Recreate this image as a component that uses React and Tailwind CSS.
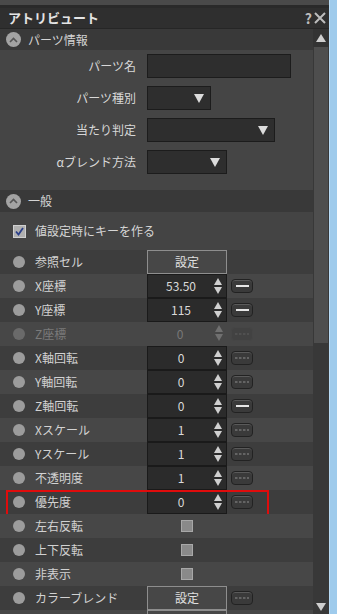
import React from 'react'

const font = { fontFamily: '"Noto Sans CJK JP", "Noto Sans", sans-serif' }

function SectionHeader({ title, h }) {
  return (
    <div className={'shrink-0 flex items-center bg-[#393939] pl-[6px] gap-[7px] ' + h}>
      <span className="w-[15px] h-[15px] rounded-full bg-[#a3a3a3] flex items-center justify-center">
        <svg width="9" height="6" viewBox="0 0 9 6">
          <path d="M1 5 L4.5 1.5 L8 5" stroke="#555" strokeWidth="1.6" fill="none" />
        </svg>
      </span>
      <span className="text-[12px] text-[#d4d4d4]">{title}</span>
    </div>
  )
}

function Arrow() {
  return (
    <svg width="10" height="9" viewBox="0 0 10 9">
      <path d="M0 0 H10 L5 9 Z" fill="#dcdcdc" />
    </svg>
  )
}

function FormRow({ label, width, select }) {
  return (
    <div className="h-[32px] shrink-0 flex items-center">
      <div className="w-[137px] text-right text-[12px] text-[#d8d8d8] pr-[1px]">{label}</div>
      <div
        className="ml-[10px] h-[24px] bg-[#2e2e2e] border border-[#1c1c1c] flex items-center justify-end pr-[6px]"
        style={{ width }}
      >
        {select && <Arrow />}
      </div>
    </div>
  )
}

function Spinner({ dim }) {
  const c = dim ? '#707070' : '#d0d0d0'
  return (
    <svg width="8" height="16" viewBox="0 0 8 16" className="absolute right-[4px] top-[3px]">
      <path d="M4 0 L8 7 H0 Z" fill={c} />
      <path d="M0 9 H8 L4 16 Z" fill={c} />
    </svg>
  )
}

function KeyButton({ kind, dim }) {
  return (
    <div
      className={
        'ml-[4px] w-[22px] h-[14px] rounded-[4px] border flex items-center justify-center ' +
        (dim ? 'border-[#464646] bg-[#424242]' : 'border-[#222] bg-[#3a3a3a] shadow-[inset_0_1px_0_#5a5a5a]')
      }
    >
      {kind === 'line' ? (
        <span className="w-[13px] h-[2px] bg-[#e6e6e6]" />
      ) : (
        <svg width="14" height="2" viewBox="0 0 14 2">
          <path d="M0 1 H14" stroke={dim ? '#5e5e5e' : '#8e8e8e'} strokeWidth="1" strokeDasharray="2.5 1.5" />
        </svg>
      )}
    </div>
  )
}

const rows = [
  { label: '参照セル', type: 'button' },
  { label: 'X座標', type: 'num', value: '53.50', key: 'line' },
  { label: 'Y座標', type: 'num', value: '115', key: 'line' },
  { label: 'Z座標', type: 'num', value: '0', key: 'dash', disabled: true },
  { label: 'X軸回転', type: 'num', value: '0', key: 'dash' },
  { label: 'Y軸回転', type: 'num', value: '0', key: 'dash' },
  { label: 'Z軸回転', type: 'num', value: '0', key: 'line' },
  { label: 'Xスケール', type: 'num', value: '1', key: 'dash' },
  { label: 'Yスケール', type: 'num', value: '1', key: 'dash' },
  { label: '不透明度', type: 'num', value: '1', key: 'dash' },
  { label: '優先度', type: 'num', value: '0', key: 'dash', highlight: true },
  { label: '左右反転', type: 'check' },
  { label: '上下反転', type: 'check' },
  { label: '非表示', type: 'check' },
  { label: 'カラーブレンド', type: 'button', key: 'dash' },
]

function PropRow({ row, index }) {
  const bg = index % 2 === 1 ? 'bg-[#474747]' : 'bg-[#3d3d3d]'
  const dis = row.disabled
  return (
    <div className={'h-[24px] shrink-0 flex items-center relative ' + bg}>
      <span className={'ml-[13px] w-[12px] h-[12px] rounded-full ' + (dis ? 'bg-[#6a6a6a]' : 'bg-[#9c9c9c]')} />
      <span className={'ml-[10px] w-[112px] text-[12px] ' + (dis ? 'text-[#7a7a7a]' : 'text-[#d2d2d2]')}>{row.label}</span>
      {row.type === 'button' && (
        <>
          <div className="w-[80px] h-[24px] bg-[#474747] border border-[#8e8e8e] flex items-center justify-center text-[12px] text-[#e0e0e0]">
            設定
          </div>
          {row.key && <KeyButton kind={row.key} />}
        </>
      )}
      {row.type === 'num' && (
        <>
          <div
            className={
              'w-[80px] h-[24px] relative flex items-center text-[12px] ' +
              (dis ? 'text-[#787878]' : 'bg-[#2b2b2b] border border-[#1a1a1a] text-[#dadada]')
            }
          >
            <span className="w-[66px] text-center">{row.value}</span>
            <Spinner dim={dis} />
          </div>
          <KeyButton kind={row.key} dim={dis} />
        </>
      )}
      {row.type === 'check' && (
        <div className="ml-[34px] w-[12px] h-[12px] bg-[#8a8a8a] border border-[#a8a8a8]" />
      )}
      {row.highlight && (
        <div className="absolute left-[6px] top-0 w-[263px] h-[30px] border-2 border-[#e00c0c] pointer-events-none" />
      )}
    </div>
  )
}

export default function App() {
  return (
    <div className="w-[337px] h-[614px] overflow-hidden flex bg-[#444]" style={font}>
      <div className="w-[329px] flex flex-col">
        <div className="h-[5px] shrink-0 bg-[#4a4a4a]" />
        <div className="h-[3px] shrink-0 bg-[#2a2a2a]" />
        <div className="h-[20px] shrink-0 bg-[#2f2f2f] flex items-center justify-between pl-[8px] pr-[3px]">
          <span className="text-[13px] font-bold text-[#e4e4e4]">アトリビュート</span>
          <span className="flex items-center gap-[2px] text-[#bdbdbd]">
            <span className="text-[14px] font-bold leading-none">?</span>
            <svg width="12" height="12" viewBox="0 0 12 12">
              <path d="M1 1 L11 11 M11 1 L1 11" stroke="#bdbdbd" strokeWidth="2" />
            </svg>
          </span>
        </div>
        <div className="h-[1px] shrink-0 bg-[#262626]" />
        <div className="flex flex-1 min-h-0">
          <div className="w-[313px] flex flex-col bg-[#444444] overflow-hidden">
            <SectionHeader title="パーツ情報" h="h-[21px]" />
            <div className="bg-[#454545] pb-[12px] shrink-0">
              <FormRow label="パーツ名" width={144} />
              <FormRow label="パーツ種別" width={64} select />
              <FormRow label="当たり判定" width={128} select />
              <FormRow label="αブレンド方法" width={80} select />
            </div>
            <SectionHeader title="一般" h="h-[22px]" />
            <div className="h-[38px] shrink-0 flex items-center bg-[#444444]">
              <span className="ml-[13px] w-[13px] h-[13px] bg-[#b0b0b0] border border-[#d0d0d0] flex items-center justify-center">
                <svg width="9" height="9" viewBox="0 0 9 9">
                  <path d="M1 4.5 L3.5 7.5 L8 1" stroke="#2a3f8a" strokeWidth="1.8" fill="none" />
                </svg>
              </span>
              <span className="ml-[9px] text-[12px] text-[#d6d6d6]">値設定時にキーを作る</span>
            </div>
            {rows.map((r, i) => (
              <PropRow key={r.label} row={r} index={i} />
            ))}
            <div className="h-[24px] shrink-0 bg-[#474747] flex">
              <div className="ml-[147px] w-[80px] h-[24px] border border-[#8e8e8e] bg-[#474747]" />
            </div>
          </div>
          <div className="w-[16px] flex flex-col bg-[#383838]">
            <div className="h-[18px] shrink-0 flex items-center justify-center bg-[#333]">
              <svg width="10" height="8" viewBox="0 0 10 8">
                <path d="M5 0 L10 8 H0 Z" fill="#cfcfcf" />
              </svg>
            </div>
            <div className="h-[296px] shrink-0 bg-[#4e4e4e] mx-[1px]" />
            <div className="flex-1" />
            <div className="h-[14px] shrink-0 flex items-center justify-center">
              <svg width="10" height="8" viewBox="0 0 10 8">
                <path d="M0 0 H10 L5 8 Z" fill="#cfcfcf" />
              </svg>
            </div>
          </div>
        </div>
      </div>
      <div className="w-[8px] bg-[#9fcbec] border-l border-[#b8dbf5]" />
    </div>
  )
}
